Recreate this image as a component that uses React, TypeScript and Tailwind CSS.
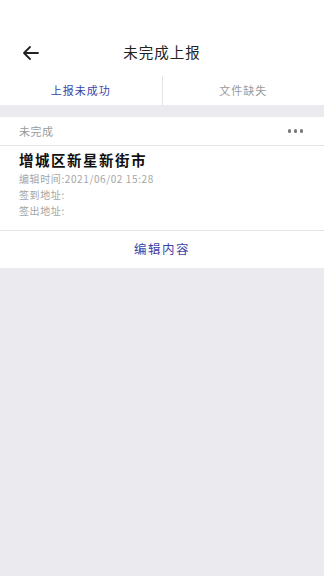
import React from 'react';

const font = { fontFamily: '"Noto Sans CJK SC", "Liberation Sans", sans-serif' };

export default function App() {
  return (
    <div className="w-[324px] h-[576px] bg-[#ebebef] flex flex-col" style={font}>
      {/* header */}
      <div className="bg-white">
        <div className="h-[76px] relative flex items-end justify-center pb-[13px]">
          <button className="absolute left-[22px] top-[45px] text-[#222]">
            <svg width="18" height="16" viewBox="0 0 18 16" fill="none" stroke="currentColor" strokeWidth="1.8" strokeLinecap="round" strokeLinejoin="round">
              <path d="M16 8H2.5M8 2L2 8l6 6" />
            </svg>
          </button>
          <h1 className="text-[14.5px] text-[#222] tracking-[1px]">未完成上报</h1>
        </div>
        <div className="h-[29px] flex">
          <div className="flex-1 flex items-center justify-center text-[11px] text-[#3b43a8] tracking-[1px]">上报未成功</div>
          <div className="w-px bg-[#e3e3e6]" />
          <div className="flex-1 flex items-center justify-center text-[11px] text-[#9a9a9a] tracking-[1px]">文件缺失</div>
        </div>
      </div>

      {/* card */}
      <div className="mt-[12px] bg-white">
        <div className="h-[29px] px-[19px] flex items-center justify-between border-b border-[#e3e3e6]">
          <span className="text-[11px] text-[#9a9a9a] tracking-[0.5px]">未完成</span>
          <span className="flex gap-[2.5px] mr-[2px]">
            <i className="w-[3.5px] h-[3.5px] rounded-full bg-[#777]" />
            <i className="w-[3.5px] h-[3.5px] rounded-full bg-[#777]" />
            <i className="w-[3.5px] h-[3.5px] rounded-full bg-[#777]" />
          </span>
        </div>
        <div className="px-[19px] pt-[3px] pb-[11px] border-b border-[#e3e3e6]">
          <div className="text-[14.5px] font-bold text-[#111] tracking-[1.5px] leading-[22px]">增城区新星新街市</div>
          <div className="text-[10px] text-[#a5a5a5] leading-[16px] tracking-[0.6px]">
            <div>编辑时间:2021/06/02 15:28</div>
            <div>签到地址:</div>
            <div>签出地址:</div>
          </div>
        </div>
        <div className="h-[37px] flex items-center justify-center text-[12.5px] text-[#3b43a8] tracking-[1.5px]">编辑内容</div>
      </div>
    </div>
  );
}
